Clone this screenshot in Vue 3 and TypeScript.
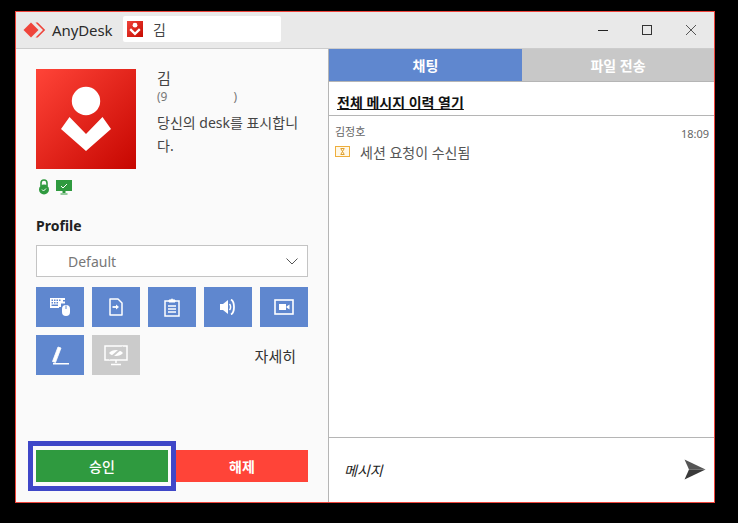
<script setup lang="ts">
const ink = 'white'
</script>

<template>
  <div class="page">
    <div class="window">
      <header class="titlebar">
        <svg class="logo" width="24" height="16" viewBox="0 0 24 16">
          <path d="M9 0.5 16.5 8 9 15.5 1.5 8Z" fill="#ef443b" />
          <path d="M13.5 0.5 15.7 0.5 23.2 8 15.7 15.5 13.5 15.5 21 8Z" fill="#ef443b" />
        </svg>
        <span class="brand">AnyDesk</span>
        <div class="session-tab">
          <span class="tab-ico">
            <svg width="16" height="16" viewBox="0 0 100 100">
              <circle cx="50" cy="26" r="15" fill="#fff" />
              <path d="M25 56 50 80 75 56 85 66 50 100 15 66Z" transform="translate(0 -10)" fill="#fff" />
            </svg>
          </span>
          <span class="tab-name">김</span>
        </div>
        <div class="win-controls">
          <svg width="12" height="12" viewBox="0 0 12 12"><path d="M1 6.5H11" stroke="#222" fill="none" /></svg>
          <svg width="12" height="12" viewBox="0 0 12 12"><rect x="1.5" y="1.5" width="9" height="9" stroke="#333" fill="none" /></svg>
          <svg width="12" height="12" viewBox="0 0 12 12"><path d="M1 1 11 11M11 1 1 11" stroke="#555" fill="none" /></svg>
        </div>
      </header>

      <div class="content">
        <aside class="left">
          <div class="identity">
            <div class="id-col">
              <div class="avatar">
                <svg width="100" height="100" viewBox="0 0 100 100">
                  <circle cx="50" cy="32" r="14.2" fill="#fff" />
                  <path d="M25 60 33.500 48 50 65 66.500 48 75 60 50 82Z" fill="#fff" />
                </svg>
              </div>
              <div class="status">
                <svg width="10" height="16" viewBox="0 0 10 16">
                  <path d="M2 7V4a3 3 0 0 1 6 0v3" fill="none" stroke="#2f9a3f" stroke-width="1.600" />
                  <circle cx="5" cy="10.500" r="5" fill="#2f9a3f" />
                  <path d="M3 10.500 4.500 12 7 9.500" fill="none" :stroke="ink" />
                </svg>
                <svg width="16" height="15" viewBox="0 0 16 15">
                  <rect width="16" height="11" fill="#2f9a3f" />
                  <path d="M6.500 13H9.500V11H6.500ZM4.500 13.500H11.500V14.500H4.500Z" fill="#2f9a3f" />
                  <path d="M5 6 7 8 11 4" fill="none" :stroke="ink" />
                </svg>
              </div>
            </div>
            <div class="info">
              <div class="name">김</div>
              <div class="addr"><span>(9</span><span>)</span></div>
              <p class="desc">당신의 desk를 표시합니다.</p>
            </div>
          </div>

          <div class="profile-label">Profile</div>
          <div class="select">
            <span>Default</span>
            <svg width="12" height="7" viewBox="0 0 12 7"><path d="M0.500 0.500 6 6 11.500 0.500" fill="none" stroke="#555" /></svg>
          </div>

          <div class="tools">
            <button class="tool">
              <svg width="20" height="18" viewBox="0 0 20 18" fill="#fff">
                <path d="M0 0H15V2H13V3.500H15V5.500H11V9H9V10H0ZM1.500 1.500V3H3V1.500ZM4 1.500V3H5.500V1.500ZM6.500 1.500V3H8V1.500ZM9 1.500V3H10.500V1.500ZM1.500 4V5.500H3V4ZM4 4V5.500H5.500V4ZM6.500 4V5.500H8V4ZM1.500 6.500V8H8V6.500Z" fill-rule="evenodd" />
                <rect x="12" y="7" width="8" height="11" rx="4" />
                <path d="M16 7.500V11" stroke="#5f87cf" />
              </svg>
            </button>
            <button class="tool">
              <svg width="14" height="18" viewBox="0 0 14 18" fill="none" stroke="#fff" stroke-width="1.500">
                <path d="M1 1H9L13 5V17H1Z" stroke-linejoin="round" />
                <path d="M3.500 9H8" stroke-width="1.800" />
                <path d="M7 6.500 10 9 7 11.500Z" fill="#fff" stroke="none" />
              </svg>
            </button>
            <button class="tool">
              <svg width="16" height="19" viewBox="0 0 16 19" fill="none" stroke="#fff" stroke-width="1.500">
                <path d="M5 3H1V18H15V3H11" />
                <path d="M5 4V2H7a1 1 0 0 1 2 0H11V4Z" fill="#fff" stroke-width="1" />
                <path d="M4 8H12M4 11H12M4 14H12" />
              </svg>
            </button>
            <button class="tool">
              <svg width="17" height="16" viewBox="0 0 17 16">
                <path d="M0 5H3L8 1V15L3 11H0Z" fill="#fff" />
                <path d="M11 0.500C15 3 15 13 11 15.500" fill="none" stroke="#fff" stroke-width="1.800" />
                <path d="M9.500 5C11 6.500 11 9.500 9.500 11" fill="none" stroke="#fff" stroke-width="1.500" />
              </svg>
            </button>
            <button class="tool">
              <svg width="20" height="16" viewBox="0 0 20 16">
                <rect x="1" y="1" width="18" height="14" fill="none" stroke="#fff" stroke-width="1.600" />
                <path d="M5 5H12V11H5ZM12.500 7.500 15.500 5.500V10.500L12.500 8.500Z" fill="#fff" />
              </svg>
            </button>
            <button class="tool">
              <svg width="17" height="19" viewBox="0 0 17 19" fill="#fff">
                <path d="M6 1 9 2 3.500 16.500 0.500 15.500Z" stroke="#fff" stroke-width="0.800" stroke-linejoin="round" />
                <rect x="1" y="17" width="16" height="1.500" />
              </svg>
            </button>
            <button class="tool tool--off">
              <svg width="24" height="21" viewBox="0 0 24 21" fill="none" stroke="#fff" stroke-width="1.500">
                <rect x="1" y="1" width="22" height="14" />
                <path d="M5 8C8 4 16 4 19 8C16 12 8 12 5 8Z" fill="#fff" stroke="none" />
                <path d="M5 14 19 2" stroke="#cbcbcb" stroke-width="1.800" />
                <path d="M12 15V18M7 19.500H17" />
              </svg>
            </button>
            <a class="more">자세히</a>
          </div>

          <div class="actions">
            <button class="action accept">
              승인
              <span class="focus-frame"></span>
            </button>
            <button class="action dismiss">해제</button>
          </div>
        </aside>

        <section class="right">
          <nav class="tabs">
            <div class="tab tab--on">채팅</div>
            <div class="tab">파일 전송</div>
          </nav>
          <div class="history"><a>전체 메시지 이력 열기</a></div>
          <div class="log">
            <div class="msg-head">
              <span class="author">김정호</span>
              <span class="time">18:09</span>
            </div>
            <div class="msg">
              <svg width="16" height="12" viewBox="0 0 16 12">
                <rect x="0.500" y="0.500" width="14" height="10" fill="#fff8e8" stroke="#eeae3c" />
                <path d="M5.500 2.500H9.500M5.500 8.500H9.500M6 3 9 8M9 3 6 8" fill="none" stroke="#e0a030" />
              </svg>
              <span>세션 요청이 수신됨</span>
            </div>
          </div>
          <div class="composer">
            <span class="placeholder">메시지</span>
            <svg width="22" height="21" viewBox="0 0 22 21">
              <path d="M0.500 0.500 21.500 10.500H5Z" fill="#555" />
              <path d="M0.500 20.500 21.500 10.500H5Z" fill="#3a3a3a" />
            </svg>
          </div>
        </section>
      </div>
    </div>
  </div>
</template>

<style>
html, body { margin: 0; background: #000; }
</style>

<style scoped>
.page {
  width: 738px;
  height: 523px;
  padding: 11px 0 0 15px;
  box-sizing: border-box;
  background: #000;
  font-family: "Noto Sans", "Noto Sans CJK KR", sans-serif;
  overflow: hidden;
}
.window {
  width: 700px;
  height: 492px;
  box-sizing: border-box;
  border: 1px solid #ef443b;
  display: flex;
  flex-direction: column;
  background: #fafafa;
}
.titlebar {
  height: 37px;
  flex: none;
  box-sizing: border-box;
  border-bottom: 1px solid #ccc;
  background: #e9e9e9;
  display: flex;
  align-items: center;
  padding-left: 6px;
}
.logo { margin-right: 6px; }
.brand { font-size: 15px; color: #2b2b2b; width: 71px; letter-spacing: -0.1px; margin-top: -1px; }
.session-tab {
  width: 158px;
  height: 26px;
  background: #fff;
  border-radius: 2px;
  display: flex;
  align-items: center;
  padding-left: 4px;
  box-sizing: border-box;
  margin-top: -2px;
}
.tab-ico {
  width: 16px;
  height: 16px;
  background: linear-gradient(135deg, #ef443b, #c60a00);
  display: flex;
}
.tab-name { font-size: 14px; color: #444; margin-left: 10px; }
.win-controls {
  margin-left: auto;
  display: flex;
  gap: 32px;
  padding-right: 17px;
}
.content { flex: 1; display: flex; min-height: 0; }
.left {
  width: 312px;
  flex: none;
  box-sizing: border-box;
  padding: 20px 20px 20px 20px;
  display: flex;
  flex-direction: column;
}
.identity { display: flex; gap: 21px; height: 147px; }
.id-col { width: 100px; flex: none; }
.avatar {
  width: 100px;
  height: 100px;
  background: linear-gradient(135deg, #ff4438, #c60600);
}
.status { display: flex; align-items: center; gap: 7px; margin-top: 10px; padding-left: 3px; }
.info { flex: 1; color: #444; font-size: 14px; }
.name { font-size: 15px; line-height: 20px; margin-top: -1px; }
.addr { font-size: 12px; line-height: 16px; color: #777; display: flex; width: 80px; justify-content: space-between; margin-top: 1px; }
.desc { margin: 6px 0 0; line-height: 23px; font-size: 14px; width: 150px; word-break: break-all; }
.profile-label { font-size: 14px; font-weight: 700; color: #222; line-height: 20px; }
.select {
  margin-top: 9px;
  height: 32px;
  box-sizing: border-box;
  border: 1px solid #c4c4c4;
  background: #fff;
  display: flex;
  align-items: center;
  justify-content: space-between;
  padding: 0 9px 0 31px;
  font-size: 14px;
  color: #777;
}
.tools {
  margin-top: 10px;
  display: grid;
  grid-template-columns: repeat(5, 48px);
  grid-auto-rows: 40px;
  gap: 8px;
}
.tool {
  border: 0;
  padding: 0;
  background: #5f87cf;
  display: flex;
  align-items: center;
  justify-content: center;
}
.tool--off { background: #cbcbcb; }
.more {
  grid-column: 3 / 6;
  justify-self: end;
  align-self: center;
  font-size: 15px;
  color: #333;
  margin-right: 12px;
}
.actions { margin-top: auto; display: flex; padding-bottom: 0; }
.action {
  height: 32px;
  width: 132px;
  border: 0;
  padding: 0;
  color: #fff;
  font: 700 14px "Noto Sans", "Noto Sans CJK KR", sans-serif;
}
.accept {
  background: #2f9a3f;
  position: relative;
  margin-right: 8px;
  font-weight: 500;
}
.dismiss { background: #ff4438; }
.focus-frame {
  position: absolute;
  left: -8px;
  top: -9px;
  width: 148px;
  height: 50px;
  box-sizing: border-box;
  border: 5px solid #3f47c8;
  pointer-events: none;
}
.right {
  flex: 1;
  min-width: 0;
  border-left: 1px solid #b5b5b5;
  background: #fff;
  display: flex;
  flex-direction: column;
}
.tabs { display: flex; height: 33px; flex: none; box-sizing: border-box; border-bottom: 1px solid #b5b5b5; }
.tab {
  flex: 1;
  background: #c8c8c8;
  color: #fff;
  font-size: 14px;
  font-weight: 700;
  display: flex;
  align-items: center;
  justify-content: center;
}
.tab--on { background: #5f87cf; flex: none; width: 193px; }
.history {
  height: 34px;
  flex: none;
  box-sizing: border-box;
  border-bottom: 1px solid #b5b5b5;
  padding: 10px 0 0 8px;
  font-size: 14px;
  line-height: 22px;
  font-weight: 700;
  color: #111;
}
.history a { text-decoration: underline; }
.log { flex: 1; padding: 8px 5px 0 6px; }
.msg-head { display: flex; justify-content: space-between; color: #666; font-size: 11px; line-height: 16px; }
.time { font-size: 11px; margin-top: 2px; }
.msg { display: flex; align-items: center; gap: 9px; font-size: 14px; color: #555; line-height: 20px; margin-top: 1px; }
.msg svg { margin-top: -3px; }
.composer {
  height: 65px;
  flex: none;
  box-sizing: border-box;
  border-top: 1px solid #b5b5b5;
  display: flex;
  align-items: center;
  justify-content: space-between;
  padding: 0 8px 1px 15px;
}
.placeholder { font-size: 14px; font-style: italic; color: #222; }
</style>
